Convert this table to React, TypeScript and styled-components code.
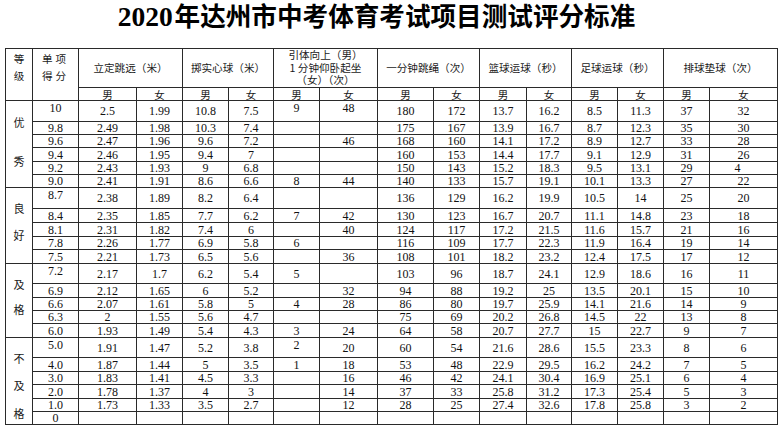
import React from "react";
import styled, { createGlobalStyle } from "styled-components";

const GlobalStyle = createGlobalStyle`
  html, body { margin: 0; padding: 0; background: #fff; }
  body { font-family: "Liberation Serif", "Noto Sans CJK SC", serif; color: #111; }
`;

const CJK = `"Noto Sans CJK SC", "Liberation Serif", sans-serif`;
const NUM = `"Liberation Serif", "Noto Sans CJK SC", serif`;
const LINE = "1px solid #2a2a2a";

const Page = styled.div`
  width: 783px;
  height: 428px;
  overflow: hidden;
`;

const Title = styled.h1`
  margin: 0;
  height: 48px;
  padding: 0 30px 0 0;
  box-sizing: border-box;
  text-align: center;
  font-family: ${CJK};
  font-weight: 700;
  font-size: 25.6px;
  line-height: 29px;
  letter-spacing: 0;
  color: #000;
  white-space: nowrap;
`;

const TitleNum = styled.span`
  font-family: ${NUM};
  font-size: 27.5px;
  font-weight: 700;
  word-spacing: -5px;
`;

const Sheet = styled.table`
  margin-left: 5px;
  width: 772px;
  table-layout: fixed;
  border-collapse: collapse;
  border: ${LINE};
`;

const Row = styled.tr<{ $h: number }>`
  height: ${(p) => p.$h}px;
`;

const HeadCell = styled.th<{ $valign?: "top" | "middle"; $spacing?: number; $lh?: number }>`
  border: ${LINE};
  padding: ${(p) => (p.$valign === "top" ? "1px 0 0" : "0")};
  vertical-align: ${(p) => p.$valign ?? "middle"};
  text-align: center;
  font-family: ${CJK};
  font-weight: 400;
  font-size: 10.6px;
  line-height: ${(p) => p.$lh ?? 12.7}px;
  letter-spacing: ${(p) => p.$spacing ?? 0}px;
  color: #1a1a1a;
  white-space: nowrap;
`;

const SubHeadCell = styled.th`
  border: ${LINE};
  padding: 0;
  vertical-align: middle;
  text-align: center;
  font-family: ${CJK};
  font-weight: 400;
  font-size: 10.5px;
  line-height: 11px;
  color: #1a1a1a;
`;

const GradeCell = styled.td`
  border: ${LINE};
  padding: 0;
  vertical-align: top;
`;

const GradeStack = styled.div<{ $pad: number }>`
  display: flex;
  flex-direction: column;
  align-items: center;
  padding-top: ${(p) => p.$pad}px;
`;

const GradeChar = styled.span<{ $gap: number }>`
  display: block;
  margin-top: ${(p) => p.$gap}px;
  font-family: ${CJK};
  font-size: 11px;
  line-height: 12px;
  color: #1a1a1a;
`;

const DataCell = styled.td<{ $top?: boolean }>`
  border: ${LINE};
  padding: ${(p) => (p.$top ? "1px 0 0" : "0")};
  vertical-align: ${(p) => (p.$top ? "top" : "middle")};
  text-align: center;
  font-family: ${NUM};
  font-size: 12px;
  line-height: 12px;
  color: #111;
  white-space: pre;
`;

const widths = [27, 46, 58, 46, 46, 45, 46, 58, 56, 46, 47, 45, 46, 46, 46, 68];

type DataRow = { h: number; v: string[]; top?: number[] };
type Group = { chars: string[]; pad: number; gaps: number[]; rows: DataRow[] };

const groups: Group[] = [
  {
    chars: ["优", "秀"],
    pad: 15,
    gaps: [0, 27],
    rows: [
      { h: 21, top: [0, 5, 6], v: ["10", "2.5", "1.99", "10.8", "7.5", "9", "48", "180", "172", "13.7", "16.2", "8.5", "11.3", "37", "32"] },
      { h: 13, v: ["9.8", "2.49", "1.98", "10.3", "7.4", "", "", "175", "167", "13.9", "16.7", "8.7", "12.3", "35", "30"] },
      { h: 13, v: ["9.6", "2.47", "1.96", "9.6", "7.2", "", "46", "168", "160", "14.1", "17.2", "8.9", "12.7", "33", "28"] },
      { h: 14, v: ["9.4", "2.46", "1.95", "9.4", "7", "", "", "160", "153", "14.4", "17.7", "9.1", "12.9", "31", "26"] },
      { h: 13, v: ["9.2", "2.43", "1.93", "9", "6.8", "", "", "150", "143", "15.2", "18.3", "9.5", "13.1", "29", "4\u2003"] },
      { h: 13, v: ["9.0", "2.41", "1.91", "8.6", "6.6", "8", "44", "140", "133", "15.7", "19.1", "10.1", "13.3", "27", "22"] },
    ],
  },
  {
    chars: ["良", "好"],
    pad: 14,
    gaps: [0, 15],
    rows: [
      { h: 21, top: [0], v: ["8.7", "2.38", "1.89", "8.2", "6.4", "", "", "136", "129", "16.2", "19.9", "10.5", "14", "25", "20"] },
      { h: 14, v: ["8.4", "2.35", "1.85", "7.7", "6.2", "7", "42", "130", "123", "16.7", "20.7", "11.1", "14.8", "23", "18"] },
      { h: 14, v: ["8.1", "2.31", "1.82", "7.4", "6", "", "40", "124", "117", "17.2", "21.5", "11.6", "15.7", "21", "16"] },
      { h: 13, v: ["7.8", "2.26", "1.77", "6.9", "5.8", "6", "", "116", "109", "17.7", "22.3", "11.9", "16.4", "19", "14"] },
      { h: 14, v: ["7.5", "2.21", "1.73", "6.5", "5.6", "", "36", "108", "101", "18.2", "23.2", "12.4", "17.5", "17", "12"] },
    ],
  },
  {
    chars: ["及", "格"],
    pad: 14,
    gaps: [0, 13],
    rows: [
      { h: 20, top: [0], v: ["7.2", "2.17", "1.7", "6.2", "5.4", "5", "", "103", "96", "18.7", "24.1", "12.9", "18.6", "16", "11"] },
      { h: 14, v: ["6.9", "2.12", "1.65", "6", "5.2", "", "32", "94", "88", "19.2", "25", "13.5", "20.1", "15", "10"] },
      { h: 13, v: ["6.6", "2.07", "1.61", "5.8", "5", "4", "28", "86", "80", "19.7", "25.9", "14.1", "21.6", "14", "9"] },
      { h: 13, v: ["6.3", "2", "1.55", "5.6", "4.7", "", "", "75", "69", "20.2", "26.8", "14.5", "22", "13", "8"] },
      { h: 14, v: ["6.0", "1.93", "1.49", "5.4", "4.3", "3", "24", "64", "58", "20.7", "27.7", "15", "22.7", "9", "7"] },
    ],
  },
  {
    chars: ["不", "及", "格"],
    pad: 14,
    gaps: [0, 15, 16],
    rows: [
      { h: 20, top: [0, 5], v: ["5.0", "1.91", "1.47", "5.2", "3.8", "2", "20", "60", "54", "21.6", "28.6", "15.5", "23.3", "8", "6"] },
      { h: 14, v: ["4.0", "1.87", "1.44", "5", "3.5", "1", "18", "53", "48", "22.9", "29.5", "16.2", "24.2", "7", "5"] },
      { h: 12, v: ["3.0", "1.83", "1.41", "4.5", "3.3", "", "16", "46", "42", "24.1", "30.4", "16.9", "25.1", "6", "4"] },
      { h: 14, v: ["2.0", "1.78", "1.37", "4", "3", "", "14", "37", "33", "25.8", "31.2", "17.3", "25.4", "5", "3"] },
      { h: 13, v: ["1.0", "1.73", "1.33", "3.5", "2.7", "", "12", "28", "25", "27.4", "32.6", "17.8", "25.8", "3", "2"] },
      { h: 13, v: ["0", "", "", "", "", "", "", "", "", "", "", "", "", "", ""] },
    ],
  },
];

const events = ["立定跳远（米）", "掷实心球（米）", null, "一分钟跳绳（次）", "篮球运球（秒）", "足球运球（秒）", "排球垫球（次）"];

export default function App() {
  return (
    <Page>
      <GlobalStyle />
      <Title>
        <TitleNum>2020 </TitleNum>年达州市中考体育考试项目测试评分标准
      </Title>
      <Sheet>
        <colgroup>
          {widths.map((w, i) => (
            <col key={i} style={{ width: w }} />
          ))}
        </colgroup>
        <thead>
          <Row $h={39}>
            <HeadCell rowSpan={2} $valign="top" $lh={17}>
              等<br />级
            </HeadCell>
            <HeadCell rowSpan={2} $valign="top" $spacing={3} $lh={17}>
              单项<br />得分
            </HeadCell>
            {events.map((e, i) =>
              e === null ? (
                <HeadCell key={i} colSpan={2}>
                  引体向上（男）
                  <br />1 分钟仰卧起坐
                  <br />（女）（次）
                </HeadCell>
              ) : (
                <HeadCell key={i} colSpan={2}>
                  {e}
                </HeadCell>
              )
            )}
          </Row>
          <Row $h={13}>
            {events.map((_, i) => (
              <React.Fragment key={i}>
                <SubHeadCell>男</SubHeadCell>
                <SubHeadCell>女</SubHeadCell>
              </React.Fragment>
            ))}
          </Row>
        </thead>
        <tbody>
          {groups.map((g, gi) =>
            g.rows.map((r, ri) => (
              <Row key={`${gi}-${ri}`} $h={r.h}>
                {ri === 0 && (
                  <GradeCell rowSpan={g.rows.length}>
                    <GradeStack $pad={g.pad}>
                      {g.chars.map((c, ci) => (
                        <GradeChar key={ci} $gap={g.gaps[ci]}>
                          {c}
                        </GradeChar>
                      ))}
                    </GradeStack>
                  </GradeCell>
                )}
                {r.v.map((val, ci) => (
                  <DataCell key={ci} $top={r.top?.includes(ci)}>
                    {val}
                  </DataCell>
                ))}
              </Row>
            ))
          )}
        </tbody>
      </Sheet>
    </Page>
  );
}
